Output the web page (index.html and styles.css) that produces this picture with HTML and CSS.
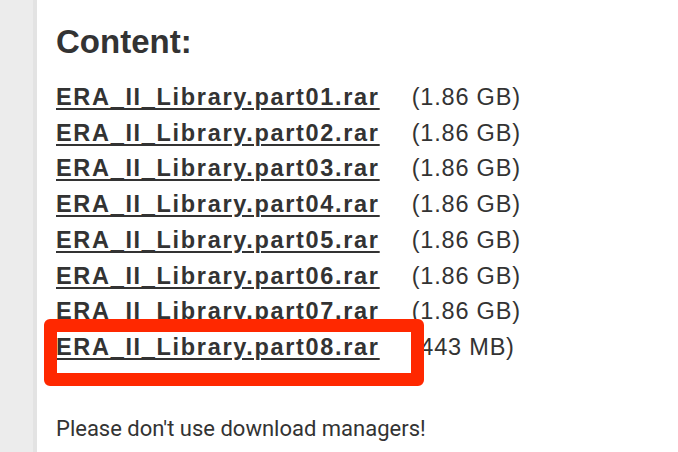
FILE: index.html
```html
<!DOCTYPE html>
<html>
<head>
<meta charset="utf-8">
<link rel="stylesheet" href="styles.css">
</head>
<body>
<div class="page">
  <div class="sidebar"></div>
  <div class="main">
    <h2 class="title">Content:</h2>
    <div class="files">
      <a class="file" href="#">ERA_II_Library.part01.rar</a><span class="size">(1.86 GB)</span>
      <a class="file" href="#">ERA_II_Library.part02.rar</a><span class="size">(1.86 GB)</span>
      <a class="file" href="#">ERA_II_Library.part03.rar</a><span class="size">(1.86 GB)</span>
      <a class="file" href="#">ERA_II_Library.part04.rar</a><span class="size">(1.86 GB)</span>
      <a class="file" href="#">ERA_II_Library.part05.rar</a><span class="size">(1.86 GB)</span>
      <a class="file" href="#">ERA_II_Library.part06.rar</a><span class="size">(1.86 GB)</span>
      <a class="file" href="#">ERA_II_Library.part07.rar</a><span class="size">(1.86 GB)</span>
      <a class="file" href="#">ERA_II_Library.part08.rar</a><span class="size">(443 MB)</span>
    </div>
    <p class="note">Please don't use download managers!</p>
    <div class="highlight"></div>
  </div>
</div>
</body>
</html>
```

FILE: styles.css
```css
html, body {
  margin: 0;
  padding: 0;
  background: #ffffff;
}
.page {
  display: flex;
  width: 678px;
  height: 452px;
  overflow: hidden;
}
.sidebar {
  width: 33px;
  flex: none;
  background: #ececec;
  border-right: 4px solid #e3e3e3;
}
.main {
  position: relative;
  flex: 1;
  padding-left: 19px;
  color: #333333;
}
.title {
  margin: 22px 0 0 0;
  font-family: "Liberation Sans", Arial, sans-serif;
  font-weight: bold;
  font-size: 33px;
  line-height: 40px;
  color: #333333;
}
.files {
  margin-top: 18px;
  display: grid;
  grid-template-columns: max-content max-content;
  column-gap: 32px;
  font-family: "Liberation Sans", Arial, sans-serif;
  font-size: 23.5px;
  line-height: 35.7px;
}
.file {
  color: #333333;
  font-weight: bold;
  letter-spacing: 1.68px;
  text-decoration: underline;
  text-decoration-thickness: 2px;
  text-underline-offset: 3px;
}
.size {
  letter-spacing: 0.8px;
}
.note {
  margin: 50px 0 0 0;
  font-family: Roboto, "Liberation Sans", sans-serif;
  font-size: 22px;
  line-height: 26px;
  color: #333333;
}
.highlight {
  position: absolute;
  left: 7px;
  top: 319px;
  width: 354px;
  height: 41px;
  border: 13px solid #ff2800;
  border-radius: 6px;
}
```
